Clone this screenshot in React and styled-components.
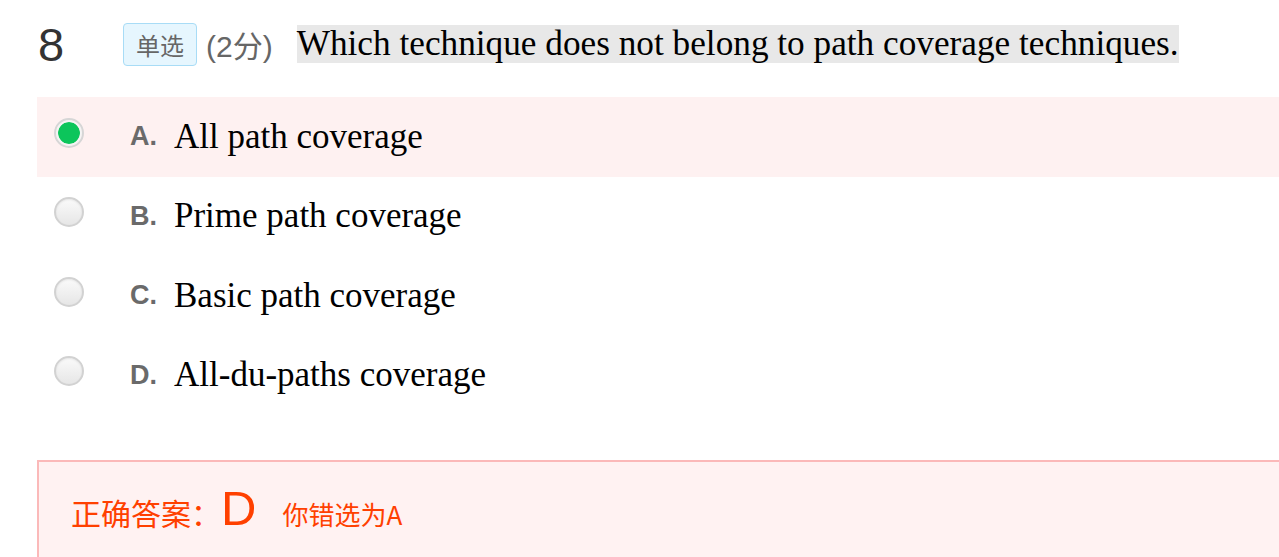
import React from "react";
import styled, { createGlobalStyle } from "styled-components";

const Global = createGlobalStyle`
  html, body { margin: 0; padding: 0; background: #fff; }
  body { font-family: "Liberation Sans", Arial, sans-serif; overflow: hidden; }
`;

const Page = styled.div`
  padding: 22px 0 0 37px;
`;

const Header = styled.div`
  display: flex;
  align-items: center;
  height: 44px;
`;

const Number = styled.div`
  width: 85px;
  flex: none;
  font-family: "Liberation Sans", Arial, sans-serif;
  font-size: 47px;
  color: #333;
  line-height: 1;
  padding-left: 1px;
`;

const Badge = styled.span`
  box-sizing: border-box;
  display: inline-flex;
  align-items: center;
  justify-content: center;
  width: 74px;
  height: 43px;
  border: 1px solid #a8dcf6;
  border-radius: 4px;
  background: #e6f6fe;
  color: #666;
  font-family: "Noto Sans CJK SC", sans-serif;
  font-size: 24px;
  flex: none;
`;

const Score = styled.span`
  margin-left: 9px;
  color: #666;
  font-family: "Liberation Sans", "Noto Sans CJK SC", sans-serif;
  font-size: 30px;
  flex: none;
`;

const Title = styled.span`
  margin-left: 24px;
  background: #e8e8e8;
  color: #000;
  font-family: "Liberation Serif", "Times New Roman", serif;
  font-size: 35.25px;
  line-height: 38px;
  white-space: nowrap;
`;

const Options = styled.div`
  margin-top: 31px;
  display: flex;
  flex-direction: column;
`;

const Row = styled.div`
  display: flex;
  align-items: center;
  height: 79.5px;
  padding-left: 17px;
  background: ${(p) => (p.$selected ? "#fef1f1" : "transparent")};
`;

const Radio = styled.span`
  box-sizing: border-box;
  width: 30px;
  height: 30px;
  border-radius: 50%;
  flex: none;
  margin-top: -8px;
  ${(p) =>
    p.$checked
      ? `
    border: 2px solid #d6d6d6;
    padding: 2px;
    background: #0cc55b content-box;
    box-shadow: inset 0 0 0 2px #f4f4f4;
  `
      : `
    border: 2px solid #d2d2d2;
    background: linear-gradient(#fafafa, #e6e6e6);
    box-shadow: inset 0 1px 2px rgba(0,0,0,0.08);
  `}
`;

const Letter = styled.span`
  margin-left: 46px;
  width: 44px;
  flex: none;
  color: #6a6a6a;
  font-family: "Liberation Sans", Arial, sans-serif;
  font-weight: bold;
  font-size: 27px;
`;

const OptionText = styled.span`
  color: #000;
  font-family: "Liberation Serif", "Times New Roman", serif;
  font-size: 35px;
`;

const AnswerBox = styled.div`
  margin-top: 45px;
  box-sizing: border-box;
  height: 120px;
  border: 2px solid #fbb9b9;
  border-right: none;
  background: #fff2f2;
  padding: 18px 0 0 32px;
  display: flex;
  align-items: baseline;
  color: #ff4000;
  font-family: "Noto Sans CJK SC", "Liberation Sans", sans-serif;
`;

const AnswerLabel = styled.span`
  font-size: 30px;
`;

const AnswerValue = styled.span`
  font-family: "Liberation Sans", Arial, sans-serif;
  font-size: 49px;
`;

const YourChoice = styled.span`
  margin-left: 26px;
  font-size: 26px;
`;

const options = [
  { key: "A", text: "All path coverage" },
  { key: "B", text: "Prime path coverage" },
  { key: "C", text: "Basic path coverage" },
  { key: "D", text: "All-du-paths coverage" },
];

export default function App() {
  const chosen = "A";
  return (
    <>
      <Global />
      <Page>
        <Header>
          <Number>8</Number>
          <Badge>单选</Badge>
          <Score>(2分)</Score>
          <Title>Which technique does not belong to path coverage techniques.</Title>
        </Header>
        <Options>
          {options.map((o) => (
            <Row key={o.key} $selected={o.key === chosen}>
              <Radio $checked={o.key === chosen} />
              <Letter>{o.key}.</Letter>
              <OptionText>{o.text}</OptionText>
            </Row>
          ))}
        </Options>
        <AnswerBox>
          <AnswerLabel>正确答案：</AnswerLabel>
          <AnswerValue>D</AnswerValue>
          <YourChoice>你错选为A</YourChoice>
        </AnswerBox>
      </Page>
    </>
  );
}
